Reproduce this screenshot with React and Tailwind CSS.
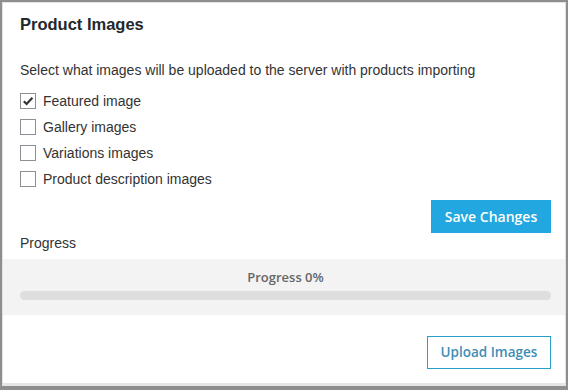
import React, { useState } from "react";

const options = [
  { id: "featured", label: "Featured image" },
  { id: "gallery", label: "Gallery images" },
  { id: "variations", label: "Variations images" },
  { id: "description", label: "Product description images" },
];

const ProductImages = () => {
  const [checked, setChecked] = useState({ featured: true });
  const progress = 0;

  return (
    <div className="w-[568px] h-[390px] bg-[#8e8e8e] pl-[2px] pt-[2px] pr-[2px] pb-[4px] font-['Liberation_Sans',Arial,sans-serif] text-[#333]">
      <div className="h-full flex flex-col bg-white border border-[#e2e2e2] border-b-[3px] border-b-[#e6e6e6]">
        <h2 className="pl-[17px] pt-[9px] text-[16.5px] leading-[24px] font-bold text-[#23282d]">Product Images</h2>

        <p className="pl-[17px] mt-[24px] text-[14px] leading-[20px]">
          Select what images will be uploaded to the server with products importing
        </p>

        {/* image type options */}
        <div className="pl-[17px] mt-[11px] flex flex-col gap-[6px]">
          {options.map((opt) => (
            <label key={opt.id} className="h-[20px] flex items-center gap-[7px] text-[14px] leading-[20px] cursor-pointer">
              <span
                className="w-[16px] h-[16px] border border-[#8c8f94] bg-white flex items-center justify-center"
                onClick={() => setChecked({ ...checked, [opt.id]: !checked[opt.id] })}
              >
                {checked[opt.id] && (
                  <svg width="12" height="12" viewBox="0 0 12 12">
                    <path d="M1.8 6.2 L4.6 9 L10.4 2.8" fill="none" stroke="#333" strokeWidth="2.2" />
                  </svg>
                )}
              </span>
              {opt.label}
            </label>
          ))}
        </div>

        <div className="pr-[14px] mt-[11px] flex justify-end">
          <button className="w-[120px] h-[33px] bg-[#22a7e0] text-white text-[14px] font-['Open_Sans',sans-serif] font-semibold">
            Save Changes
          </button>
        </div>

        <div className="pl-[17px] text-[14px] leading-[20px]">Progress</div>

        {/* progress block */}
        <div className="mt-[6px] bg-[#f3f3f3] h-[56px] pl-[17px] pr-[14px] pt-[8px]">
          <div className="text-center text-[13px] leading-[20px] font-['Open_Sans',sans-serif] font-semibold text-[#666]">
            Progress {progress}%
          </div>
          <div className="mt-[4px] h-[9px] rounded-full bg-[#dedede]">
            <div className="h-full rounded-full bg-[#22a7e0]" style={{ width: `${progress}%` }} />
          </div>
        </div>

        <div className="pr-[14px] mt-[21px] flex justify-end">
          <button className="w-[124px] h-[33px] border border-[#2b9fcb] text-[#3f8db3] text-[13.5px] font-['Open_Sans',sans-serif] font-semibold bg-white">
            Upload Images
          </button>
        </div>
      </div>
    </div>
  );
};

export default function App() {
  return <ProductImages />;
}
